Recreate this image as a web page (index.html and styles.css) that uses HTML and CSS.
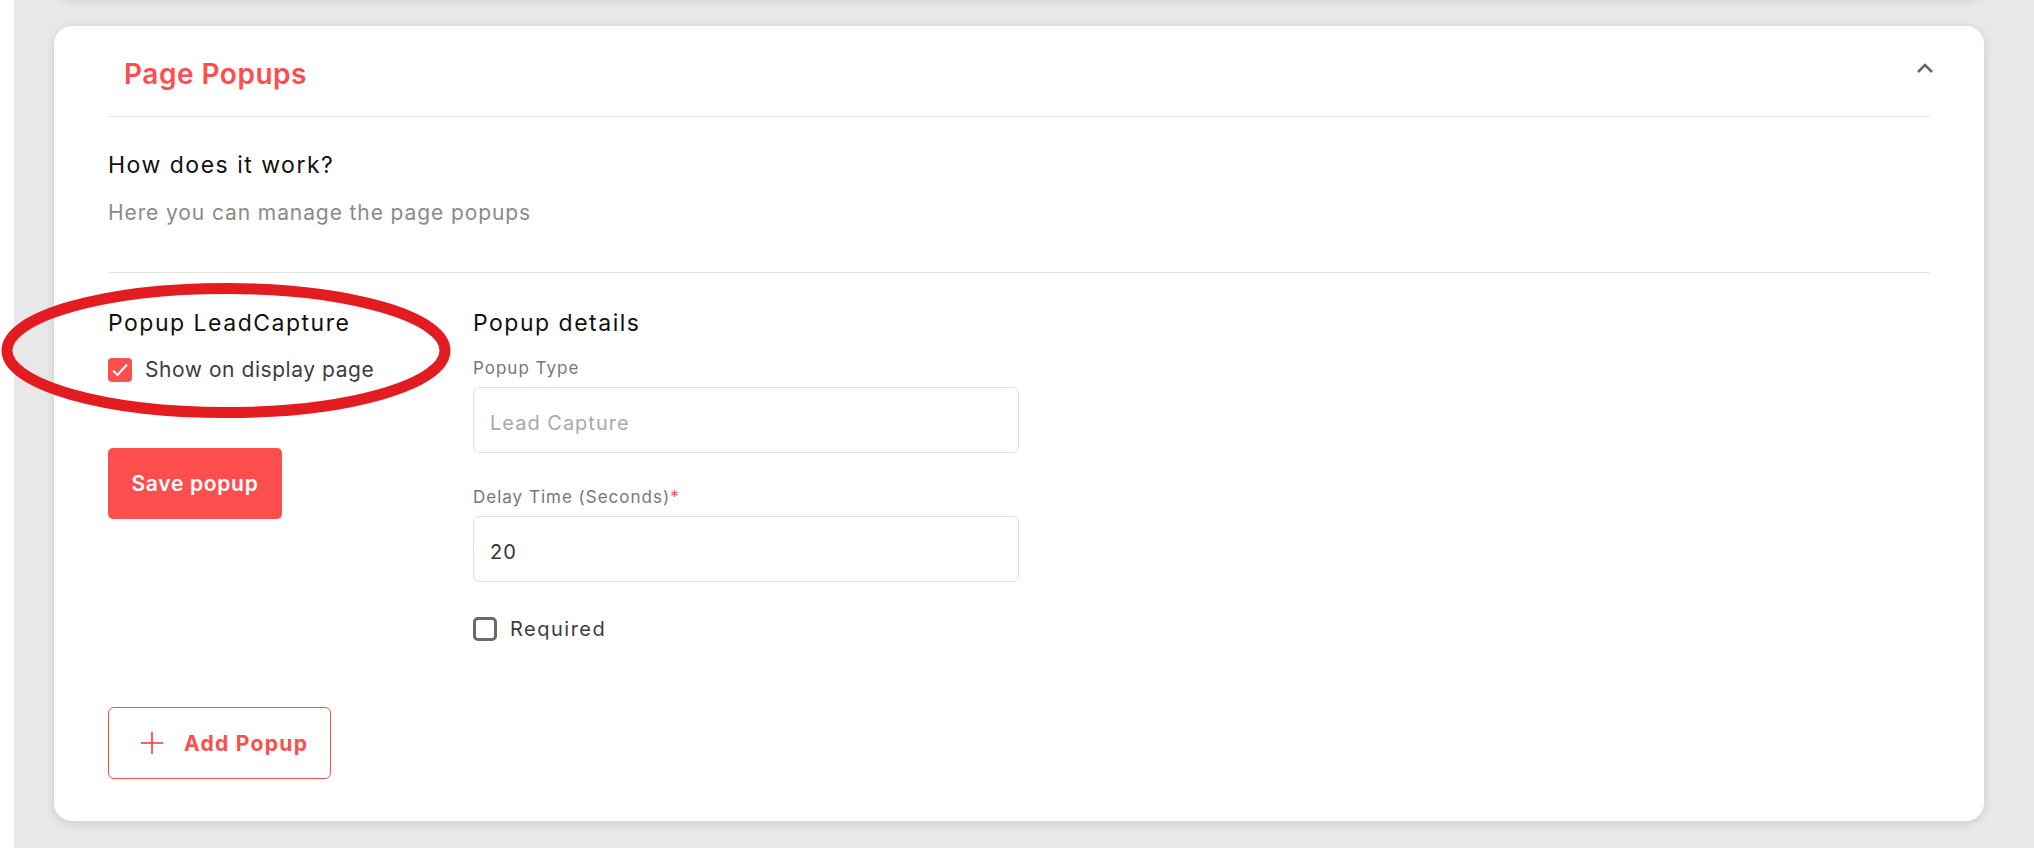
FILE: index.html
```html
<!DOCTYPE html>
<html lang="en">

<head>
   <meta charset="UTF-8">
   <meta name="viewport" content="width=device-width, initial-scale=1.0">
   <link rel="stylesheet" href="styles.css">
</head>

<body>
   <div class="layout">
      <div class="content">
         <div class="card card-prev"></div>

         <section class="card">
            <header class="card-head">
               <h2 class="card-title">Page Popups</h2>
               <svg class="chevron" width="18" height="12" viewBox="0 0 18 12">
                  <polyline points="2,10 9,3 16,10" fill="none" stroke="#666" stroke-width="2.6" />
               </svg>
            </header>

            <div class="intro">
               <h3 class="block-title">How does it work?</h3>
               <p class="intro-text">Here you can manage the page popups</p>
            </div>

            <div class="popup-row">
               <div class="popup-side">
                  <h3 class="block-title">Popup LeadCapture</h3>
                  <label class="check">
                     <span class="box box-on">
                        <svg width="24" height="24" viewBox="0 0 24 24">
                           <polyline points="5,12.5 9.5,17 19,6.5" fill="none" stroke="#fff" stroke-width="2" />
                        </svg>
                     </span>
                     Show on display page
                  </label>
                  <button class="btn-save">Save popup</button>
               </div>

               <div class="popup-details">
                  <h3 class="block-title">Popup details</h3>
                  <label class="field-label">Popup Type</label>
                  <input class="field" placeholder="Lead Capture" />
                  <label class="field-label label-gap">Delay Time (Seconds)<span class="req">*</span></label>
                  <input class="field" value="20" />
                  <label class="check check-req">
                     <span class="box"></span>
                     Required
                  </label>
               </div>
            </div>

            <button class="btn-add">
               <svg width="24" height="24" viewBox="0 0 24 24">
                  <line x1="12" y1="1" x2="12" y2="23" stroke="#fd4e4e" stroke-width="1.8" />
                  <line x1="1" y1="12" x2="23" y2="12" stroke="#fd4e4e" stroke-width="1.8" />
               </svg>
               Add Popup
            </button>
         </section>
      </div>

      <svg class="annotation" width="460" height="140" viewBox="0 0 460 140">
         <ellipse cx="226" cy="68.5" rx="219" ry="62" fill="none" stroke="#e31c21" stroke-width="11" />
      </svg>
   </div>
</body>

</html>
```

FILE: styles.css
```css
body {
   margin: 0;
   background-color: #fff;
   font-family: Inter, "Noto Sans", sans-serif;
   color: #222;
}

.layout {
   position: relative;
}

.content {
   margin-left: 14px;
   min-height: 848px;
   box-sizing: border-box;
   padding: 26px 50px 27px 40px;
   background-color: #e8e8e8;
   overflow: hidden;
}

.card {
   background-color: #fff;
   border-radius: 18px;
   box-shadow: 0 2px 10px rgba(0, 0, 0, 0.13);
   padding: 0 54px 42px;
}

.card-prev {
   height: 40px;
   margin-top: -68px;
   margin-bottom: 28px;
   padding: 0;
}

.card-head {
   display: flex;
   align-items: center;
   justify-content: space-between;
   box-sizing: border-box;
   height: 91px;
   padding-left: 16px;
   border-bottom: 1px solid #e2e2e2;
}

.card-title {
   margin: 6px 0 0;
   font-size: 28px;
   font-weight: 600;
   letter-spacing: 0.5px;
   color: #fd4e4e;
}

.chevron {
   margin-right: -4px;
   margin-bottom: 6px;
}

.intro {
   padding: 34px 0 46px;
   border-bottom: 1px solid #e2e2e2;
}

.block-title {
   margin: 0;
   font-size: 23px;
   line-height: 28px;
   font-weight: 400;
   letter-spacing: 1.5px;
   color: #111;
}

.intro-text {
   margin: 21px 0 0;
   font-size: 21px;
   line-height: 26px;
   letter-spacing: 0.9px;
   color: #8a8a8a;
}

.popup-row {
   display: grid;
   grid-template-columns: 365px 546px;
   padding-top: 36px;
}

.popup-side {
   display: flex;
   flex-direction: column;
   align-items: flex-start;
}

.check {
   display: flex;
   align-items: center;
   gap: 13px;
   margin-top: 21px;
   font-size: 21px;
   line-height: 24px;
   letter-spacing: 0.55px;
   color: #3c3c3c;
}

.box {
   display: flex;
   align-items: center;
   justify-content: center;
   box-sizing: border-box;
   width: 24px;
   height: 24px;
   border: 3px solid #6a6a6a;
   border-radius: 5px;
}

.box-on {
   border: none;
   border-radius: 4px;
   background-color: #f94f4f;
}

.btn-save {
   margin-top: 66px;
   width: 174px;
   height: 71px;
   border: none;
   border-radius: 5px;
   background-color: #fd4e4e;
   color: #fff;
   font-family: Inter, "Noto Sans", sans-serif;
   font-size: 21px;
   font-weight: 600;
   letter-spacing: 0.7px;
}

.field-label {
   display: block;
   margin-top: 20px;
   font-size: 17px;
   line-height: 22px;
   letter-spacing: 1px;
   color: #777;
}

.label-gap {
   margin-top: 33px;
}

.req {
   color: #fd4e4e;
}

.field {
   display: block;
   box-sizing: border-box;
   width: 100%;
   height: 66px;
   margin-top: 8px;
   padding: 5px 16px 0;
   border: 1px solid #dedede;
   border-radius: 6px;
   font-family: Inter, "Noto Sans", sans-serif;
   font-size: 20px;
   letter-spacing: 1px;
   color: #333;
}

.field::placeholder {
   color: #a9a9a9;
}

.check-req {
   margin-top: 35px;
   font-size: 20px;
   letter-spacing: 1.5px;
}

.btn-add {
   display: flex;
   align-items: center;
   gap: 20px;
   margin-top: 66px;
   width: 223px;
   height: 72px;
   padding: 0 0 0 31px;
   border: 1px solid #fd4e4e;
   border-radius: 6px;
   background-color: #fff;
   color: #fd4e4e;
   font-family: Inter, "Noto Sans", sans-serif;
   font-size: 21px;
   font-weight: 700;
   letter-spacing: 1.3px;
}

.annotation {
   position: absolute;
   left: 0;
   top: 282px;
}
```
